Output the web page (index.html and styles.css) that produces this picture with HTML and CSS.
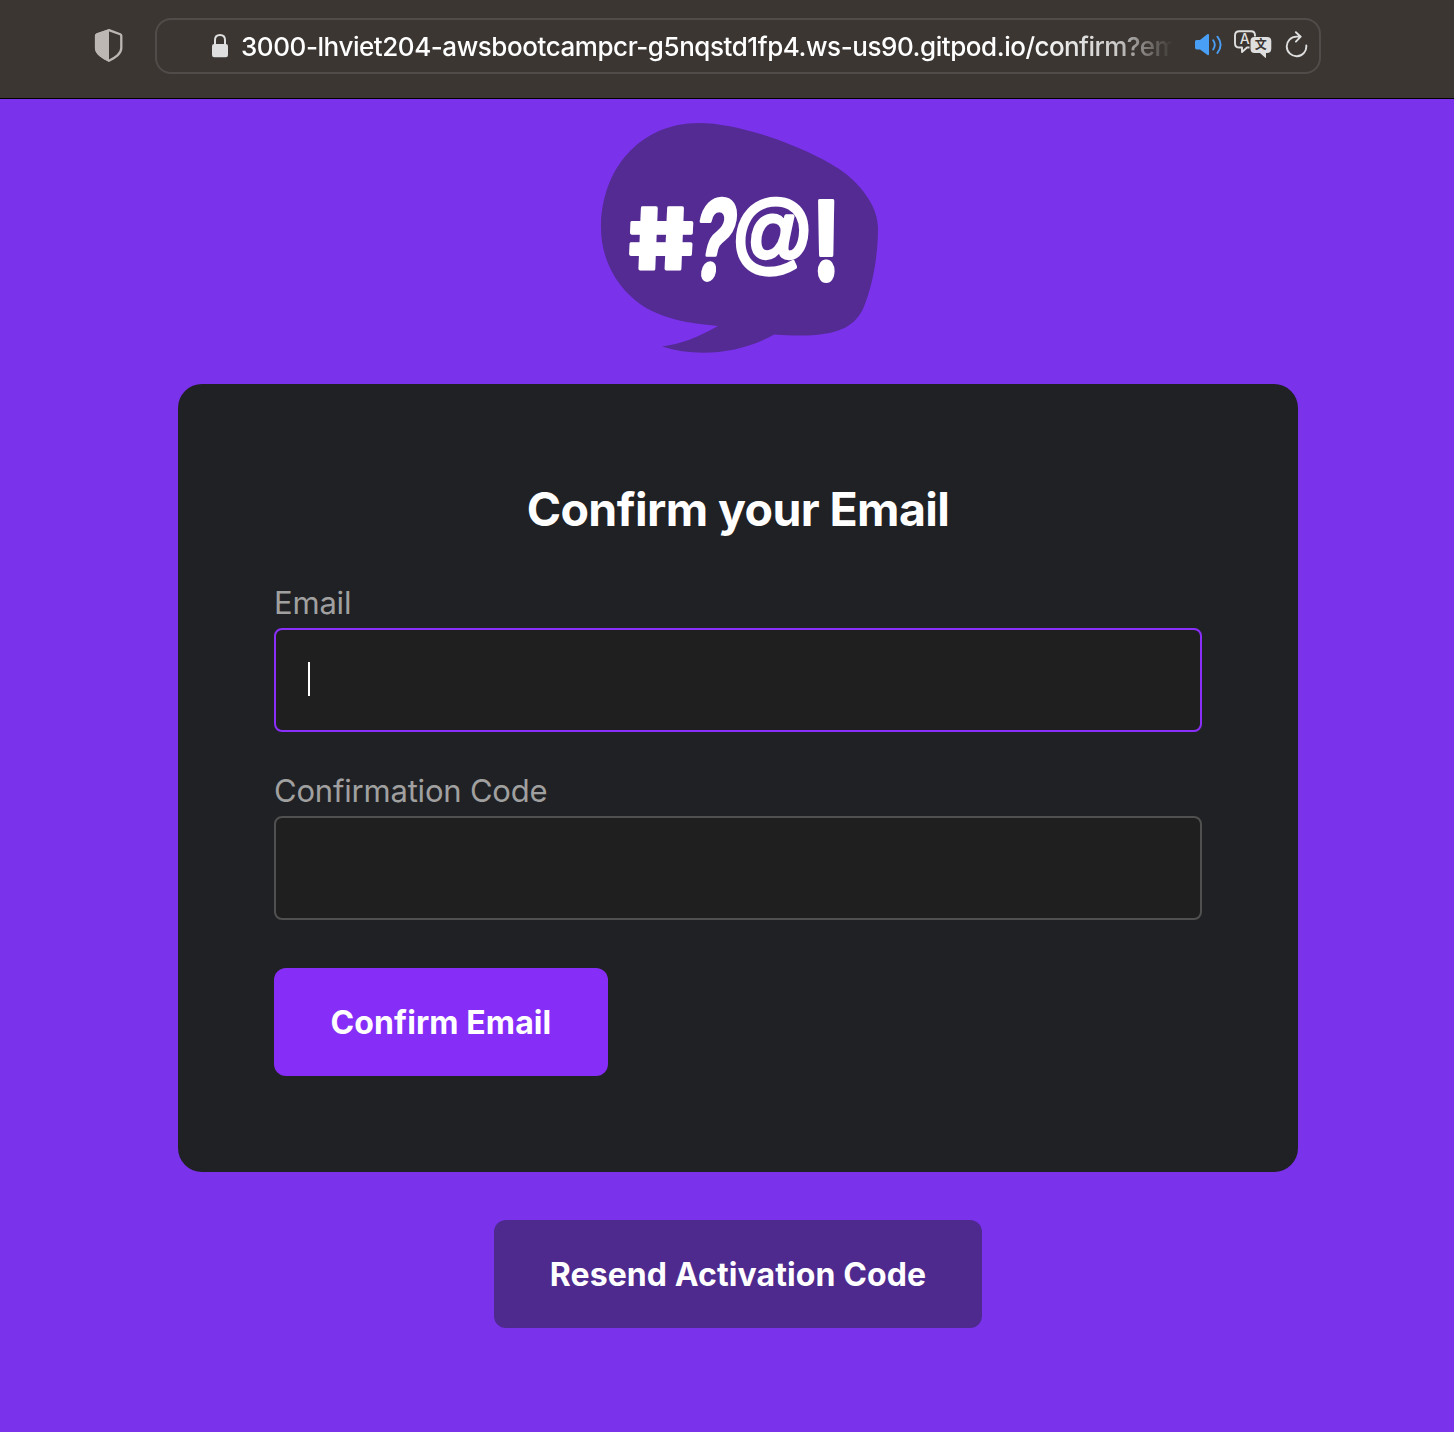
FILE: index.html
```html
<!DOCTYPE html>
<html lang="en">
<head>
<meta charset="utf-8">
<title>Confirm your Email</title>
<link rel="stylesheet" href="styles.css">
</head>
<body>
<header class="toolbar">
  <svg class="shield" width="30" height="36" viewBox="0 0 30 36">
    <path d="M15 2.2 L26.2 6.2 Q27.3 6.700 27.3 8 V20 Q27.3 24 23.5 27.3 Q20 30.3 15 32.7 Q10 30.3 6 27 Q2 23.7 2 20 V8 Q2 6.700 3.1 6.2 Z" fill="none" stroke="#bdb7b4" stroke-width="2.3"/>
    <path d="M15 1.2 L3 5.3 Q1 6 1 8 V20 Q1 24.5 5.5 28 Q9.5 31.5 15 33.8 Z" fill="#bdb7b4"/>
  </svg>
  <div class="address">
    <svg class="lock" width="18" height="26" viewBox="0 0 18 26">
      <path d="M4 12 V7 Q4 2 9 2 Q14 2 14 7 V12" fill="none" stroke="#dfdfdf" stroke-width="2"/>
      <rect x="1" y="11" width="16" height="13.2" rx="2.2" fill="#dfdfdf"/>
    </svg>
    <div class="url"><span class="host">3000-lhviet204-awsbootcampcr-g5nqstd1fp4.ws-us90.gitpod.io</span><span class="path">/confirm?em</span></div>
    <svg class="sound" width="30" height="26" viewBox="0 0 30 26">
      <path d="M2.2 8 H6 L13.2 2.3 Q15 1.2 15 3.2 V22 Q15 24 13.2 22.7 L6 17.5 H2.8 Q1 17.5 1 15.7 V9.5 Q1 8 2.5 8 Z" fill="#489ff5"/>
      <path d="M19.2 8.2 Q22.4 12.7 19.2 17.5 M23.4 4.7 Q29.8 12.7 23.4 20.9" fill="none" stroke="#489ff5" stroke-width="1.9" stroke-linecap="round"/>
    </svg>
    <svg class="translate" width="38" height="30" viewBox="0 0 38 30">
      <path d="M15.5 17.5 H13 L8 22 V17.5 H5.5 Q1 17.5 1 13.2 V5.5 Q1 1.2 5.5 1.2 H17 Q21 1.2 21 5.4 V6.5" fill="none" stroke="#dfdfdf" stroke-width="1.9" stroke-linejoin="round"/>
      <path d="M20.5 7 H33 Q37.3 7 37.3 11 V18.5 Q37.3 23 33 23 H32 V27 Q32 28.6 30.7 27.3 L26 23 H20.5 Q16.5 23 16.5 18.8 V11 Q16.5 7 20.5 7 Z" fill="#dfdfdf"/>
      <text class="latin-mark" x="10.8" y="14" text-anchor="middle">A</text>
      <text class="han-mark" x="26.8" y="19" text-anchor="middle">文</text>
    </svg>
    <svg class="reload" width="24" height="28" viewBox="0 0 24 28">
      <path d="M21.3 14.5 A9.8 9.8 0 1 1 11.5 5.6 H15.6 M10.9 1.2 L15.7 5.7 L10.9 10.6" fill="none" stroke="#dfdfdf" stroke-width="1.9" stroke-linecap="round" stroke-linejoin="round"/>
    </svg>
  </div>
</header>
<main class="page">
  <svg class="logo" width="278" height="232" viewBox="600 122 278 232" role="img" aria-label="Logo">
    <path d="M601 228 C601 169 640 123 699 123 C742 123 811 149 842 171 C864 187 878 209 878 228 C878 258 872 288 863 309 C851 333 826 338 774 334.500 C742 353 698 358 662 346.500 C682 344 698 337 718 326 C692 323 676 322 652 311 C620 295 601 262 601 228 Z" fill="#542b93"/>
    <g class="mark">
      <text transform="translate(632.500 268.500) skewX(9) scale(1.28 1.05)">#</text>
      <text class="query" transform="translate(689 279) skewX(-9) scale(.93 1.36)">?</text>
      <text class="at" transform="translate(731.500 261.500) scale(1.01 1.1)">@</text>
      <text transform="translate(813 279.500) scale(.92 1.36)">!</text>
    </g>
  </svg>
  <form class="card">
    <h1>Confirm your Email</h1>
    <div class="field">
      <label for="email">Email</label>
      <div class="control"><input class="focused" id="email" type="text"><span class="caret"></span></div>
    </div>
    <div class="field">
      <label for="code">Confirmation Code</label>
      <div class="control"><input id="code" type="text"></div>
    </div>
    <button class="submit" type="button"><span>Confirm Email</span></button>
  </form>
  <button class="resend" type="button"><span>Resend Activation Code</span></button>
</main>
</body>
</html>
```

FILE: styles.css
```css
* { box-sizing: border-box; }
body {
  margin: 0;
  min-height: 1432px;
  background: #7a32eb;
  font-family: Inter, "Liberation Sans", sans-serif;
}
svg { display: block; flex: none; }
.toolbar {
  height: 99px;
  display: flex;
  align-items: flex-start;
  padding: 18px 133px 0 94px;
  background: #3b3632;
  border-bottom: 1px solid #000;
}
.shield { margin: 10px 31px 0 0; }
.address {
  flex: 1;
  height: 56px;
  display: flex;
  align-items: center;
  border: 2px solid #514c49;
  border-radius: 16px;
  padding: 0 10px 0 54px;
}
.lock { margin-right: 12px; }
.url {
  width: 934px;
  padding-top: 2px;
  white-space: nowrap;
  font-size: 26px;
  font-weight: 500;
  line-height: 40px;
  letter-spacing: -.44px;
  color: #fff;
  mask-image: linear-gradient(to right, #000 785px, rgba(0, 0, 0, .75) 875px, transparent 932px);
}
.path { letter-spacing: -.6px; }
.sound { margin: -3px 0 0 19px; }
.translate { margin: -2px 0 0 10px; }
.latin-mark { font: 500 14px Inter, sans-serif; fill: #dfdfdf; }
.han-mark { font: 700 12px "Noto Sans CJK SC", sans-serif; fill: #3b3632; }
.reload { margin: -3px 0 0 13px; }
.page {
  display: flex;
  flex-direction: column;
  align-items: center;
  padding: 23px 0 0 22px;
}
.logo { margin-left: 2px; }
.mark text {
  font: 800 80px Inter, sans-serif;
  fill: #fff;
  stroke: #fff;
  stroke-width: 3px;
  stroke-linejoin: round;
}
.mark .query { font-weight: 600; }
.mark .at {
  font: 400 80px "Liberation Sans", sans-serif;
  stroke-width: 4px;
}
.card {
  width: 1120px;
  height: 788px;
  margin: 30px 0 48px;
  padding: 96px;
  border-radius: 24px;
  background: #202124;
}
h1 {
  margin: 0;
  text-align: center;
  font-size: 46.500px;
  font-weight: 700;
  line-height: 58px;
  letter-spacing: -.6px;
  color: #fff;
}
.field { margin-top: 46px; }
.field + .field { margin-top: 40px; }
.field label {
  display: block;
  height: 44px;
  font-size: 31px;
  line-height: 38px;
  letter-spacing: -.2px;
  color: #a0a0a0;
}
.control { position: relative; height: 104px; }
.control input {
  display: block;
  width: 928px;
  height: 104px;
  padding: 32px;
  border: 2px solid #505050;
  border-radius: 8px;
  outline: none;
  background: #1f1f1f;
  color: #fff;
  font: inherit;
}
.control .focused { border-color: #8a2ffa; }
.caret {
  position: absolute;
  left: 34px;
  top: 34px;
  width: 2px;
  height: 34px;
  background: #fff;
}
button {
  display: block;
  height: 108px;
  padding: 2px 0 0;
  border: 0;
  border-radius: 12px;
  color: #fff;
  font: 700 32px/106px Inter, sans-serif;
  letter-spacing: .1px;
  white-space: nowrap;
}
.submit { width: 334px; margin-top: 48px; background: #862df7; }
.resend { width: 488px; background: #4e2a8e; }
```
